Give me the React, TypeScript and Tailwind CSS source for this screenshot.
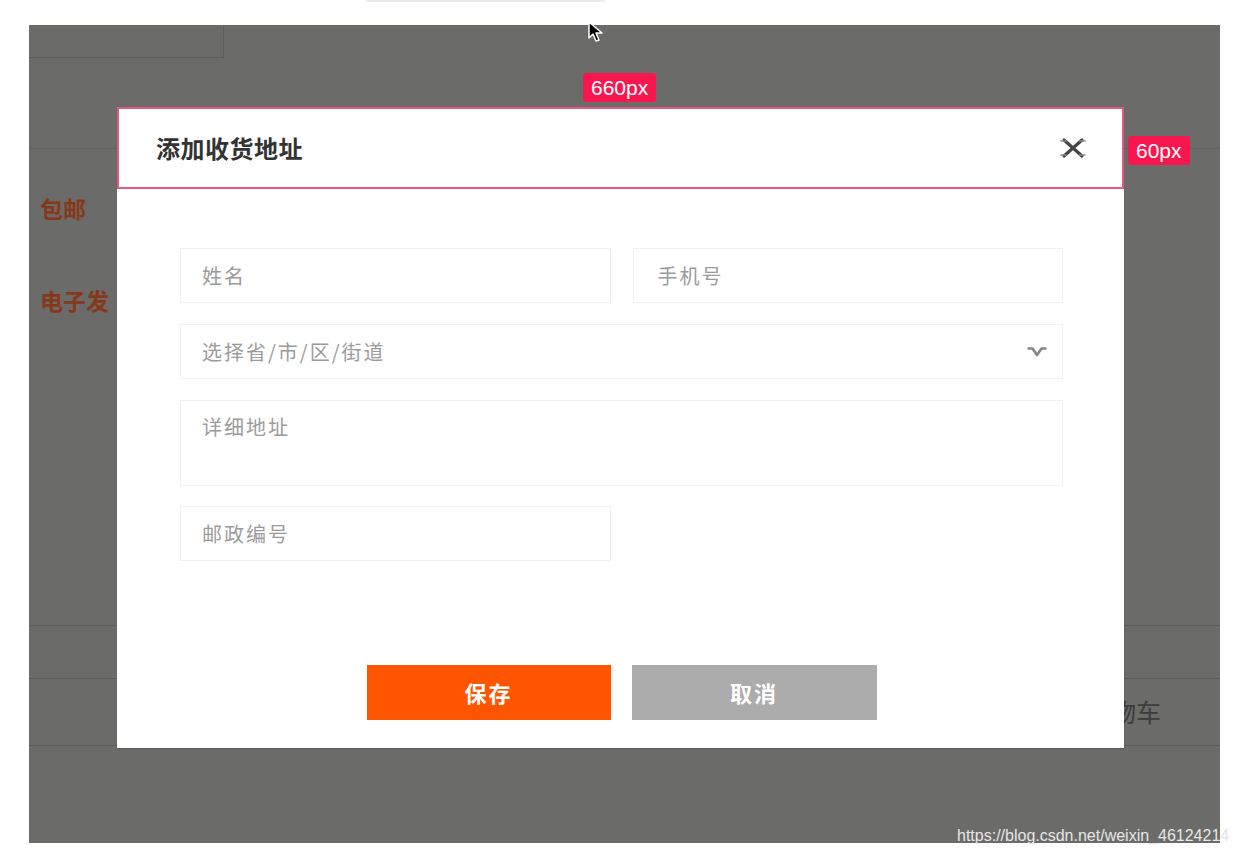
import React from "react";

const CloseIcon = () => (
  <svg width="26" height="22" viewBox="0 0 26 22" fill="none">
    <path d="M4 3 L22 19 M22 3 L4 19" stroke="#454545" strokeWidth="3.2" strokeLinecap="round" />
    <path d="M1 4 H6 M20 4 H25 M1 18 H6 M20 18 H25" stroke="#8a8a8a" strokeWidth="2" strokeLinecap="round" opacity="0.7" />
  </svg>
);

const ArrowDown = () => (
  <svg width="22" height="12" viewBox="0 0 22 12" fill="none">
    <path d="M1.5 2.5 H6.5 L11 9 L15.5 2.5 H20.5" stroke="#868686" strokeWidth="2.6" strokeLinejoin="round" />
  </svg>
);

const Cursor = () => (
  <svg width="20" height="22" viewBox="0 0 20 22">
    <path d="M2 1 L2 17 L6 13 L9 20 L12 19 L9 12 L15 12 Z" fill="#000" stroke="#fff" strokeWidth="1.5" strokeLinejoin="round" />
  </svg>
);

const Field = ({ label, className = "" }: { label: string; className?: string }) => (
  <div
    className={
      "h-[55px] border border-[#f1f1f1] pl-[21px] flex items-center text-[20px] tracking-[2px] text-[#9b9b9b] " +
      className
    }
  >
    {label}
  </div>
);

const Badge = ({ text, className = "" }: { text: string; className?: string }) => (
  <div
    className={
      "absolute h-[29px] px-[8px] flex items-center rounded-[3px] bg-[#f7174e] text-white text-[21px] font-['Liberation_Sans',Arial,sans-serif] " +
      className
    }
  >
    {text}
  </div>
);

export default function App() {
  return (
    <div className="relative w-[1239px] h-[854px] bg-white overflow-hidden font-['Noto_Sans_CJK_SC','Noto_Sans',sans-serif]">
      {/* tab edge at the very top */}
      <div className="absolute left-[365px] top-[-8px] w-[241px] h-[10px] rounded-[4px] bg-[#e9ebee]" />

      {/* dimmed page */}
      <div className="relative ml-[29px] mt-[25px] w-[1191px] h-[818px] bg-[#6b6b69] overflow-hidden">
        <div className="flex flex-col">
          <div className="w-[195px] h-[33px] border-r border-b border-[#5e5e5c]" />
          <div className="mt-[90px] h-px bg-[#626260]" />
          <div className="mt-[45px] ml-[11px] text-[23px] font-bold text-[#86391a] leading-[28px]">包邮</div>
          <div className="mt-[64px] ml-[11px] text-[23px] font-bold text-[#86391a] leading-[28px]">电子发</div>
          <div className="mt-[311px] h-px bg-[#5f5f5d]" />
          <div className="mt-[52px] h-px bg-[#5c5c5a]" />
          <div className="h-[66px] flex items-center pl-[1057px] text-[25px] text-[#3c3c3c]">
            购物车
          </div>
          <div className="h-px bg-[#5c5c5a]" />
        </div>
      </div>

      {/* watermark */}
      <div className="absolute left-[957px] top-[824px] text-[16px] text-[#e6e6e6] font-['Liberation_Sans',Arial,sans-serif]">
        https://blog.csdn.net/weixin_4612421<span className="text-[#e4e4e4]">4</span>
      </div>

      <div className="absolute left-[587px] top-[21px]">
        <Cursor />
      </div>

      {/* modal */}
      <div className="absolute left-[117px] top-[107px] w-[1007px] h-[641px] bg-white shadow-[0_1px_1px_rgba(0,0,0,0.15)]">
        <div className="h-[82px] border-2 border-[#e05a84] flex items-center justify-between pl-[37px] pr-[36px]">
          <span className="text-[24px] font-bold text-[#333] tracking-[0.5px]">添加收货地址</span>
          <CloseIcon />
        </div>

        <div className="pl-[63px] pr-[61px] pt-[59px]">
          <div className="grid grid-cols-2 gap-x-[22px]">
            <Field label="姓名" />
            <Field label="手机号" className="pl-[24px]" />
          </div>
          <div className="mt-[21px] h-[55px] border border-[#f1f1f1] pl-[21px] pr-[14px] flex items-center justify-between text-[20px] tracking-[2px] text-[#9b9b9b]">
            <span>选择省/市/区/街道</span>
            <ArrowDown />
          </div>
          <div className="mt-[21px] h-[86px] border border-[#f1f1f1] pl-[21px] pt-[11px] text-[20px] tracking-[2px] text-[#9b9b9b]">
            详细地址
          </div>
          <div className="mt-[20px] grid grid-cols-2 gap-x-[22px]">
            <Field label="邮政编号" />
          </div>

          <div className="mt-[104px] flex justify-center gap-[21px]">
            <button className="w-[244px] h-[55px] bg-[#ff5500] text-white text-[22px] font-bold tracking-[2px]">
              保存
            </button>
            <button className="w-[245px] h-[55px] bg-[#acacac] text-white text-[22px] font-bold tracking-[2px]">
              取消
            </button>
          </div>
        </div>
      </div>

      <Badge text="660px" className="left-[583px] top-[73px]" />
      <Badge text="60px" className="left-[1128px] top-[136px]" />
    </div>
  );
}
